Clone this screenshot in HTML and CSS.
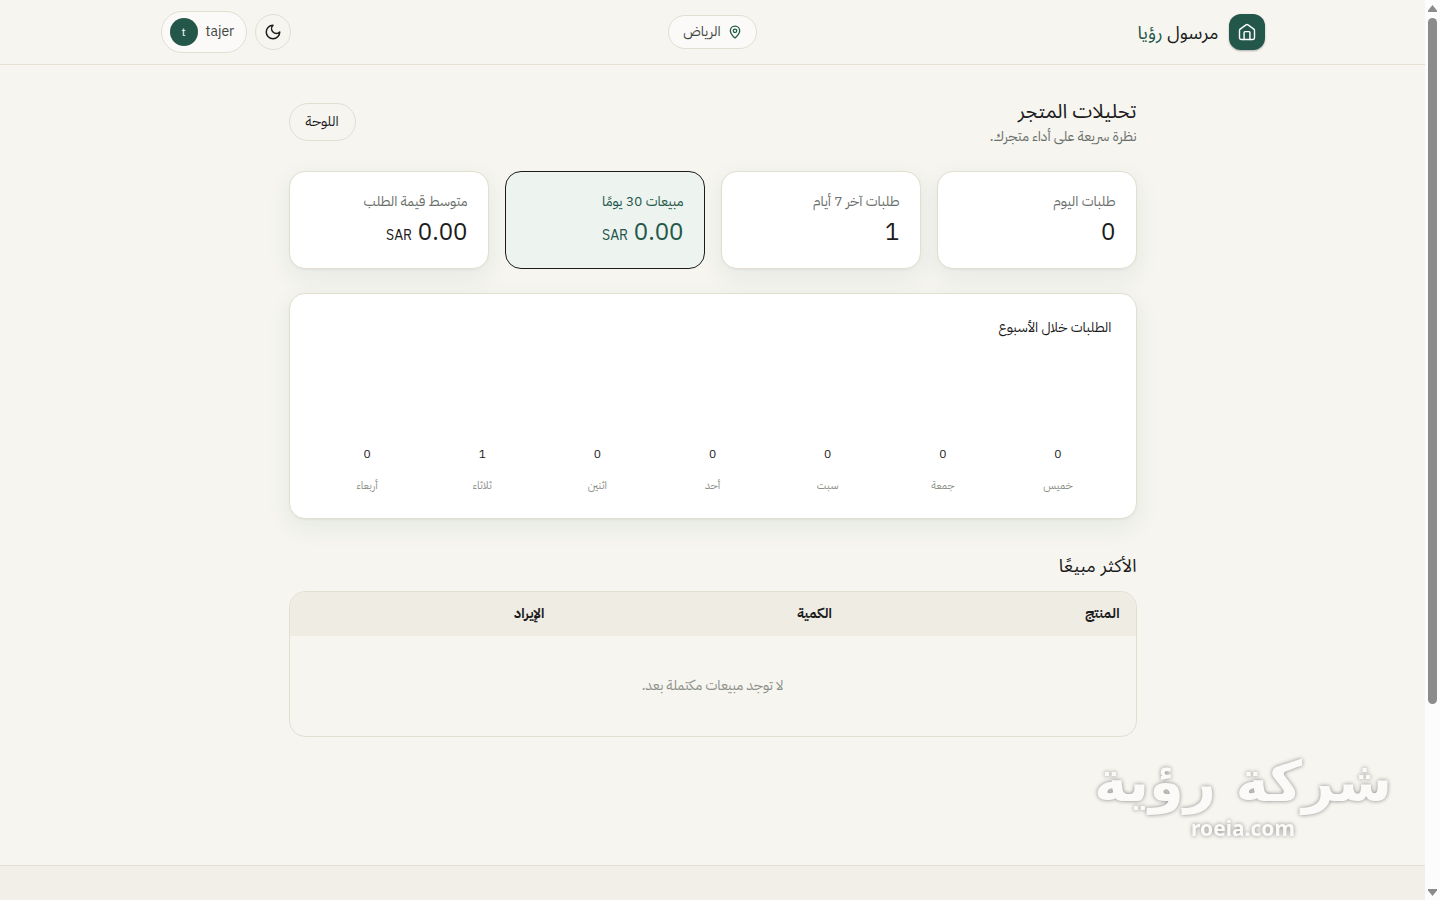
FILE: index.html
```html
<!DOCTYPE html>
<html lang="ar" dir="rtl">
<head>
  <meta charset="UTF-8">
  <meta name="viewport" content="width=device-width, initial-scale=1.0">
  <title>تحليلات المتجر</title>
  <link rel="stylesheet" href="styles.css">
</head>
<body>
  <div class="page">
    <header class="header">
      <div class="header_inner">
        <a href="#" class="brand">
          <span class="brand_logo">
            <svg width="20" height="20" viewBox="0 0 24 24" fill="none" stroke="currentColor" stroke-width="1.7" stroke-linecap="round" stroke-linejoin="round">
              <path d="M3 10.2a2 2 0 0 1 .8-1.6l7-5.2a2 2 0 0 1 2.4 0l7 5.2a2 2 0 0 1 .8 1.6V19a2 2 0 0 1-2 2H5a2 2 0 0 1-2-2z"/>
              <path d="M8.5 21v-8.500a1 1 0 0 1 1-1h5a1 1 0 0 1 1 1V21"/>
            </svg>
          </span>
          <span class="brand_name">مرسول <span class="accent">رؤيا</span></span>
        </a>
        <button type="button" class="city">
          <svg width="14" height="14" viewBox="0 0 24 24" fill="none" stroke="currentColor" stroke-width="2.2" stroke-linecap="round" stroke-linejoin="round">
            <path d="M20 10c0 5-5.500 10.200-7.400 11.800a1 1 0 0 1-1.200 0C9.500 20.200 4 15 4 10a8 8 0 0 1 16 0z"/>
            <circle cx="12" cy="10" r="3"/>
          </svg>
          <span>الرياض</span>
        </button>
        <div class="actions">
          <button type="button" class="theme" aria-label="الوضع الليلي">
            <svg width="18" height="18" viewBox="0 0 24 24" fill="none" stroke="currentColor" stroke-width="2" stroke-linecap="round" stroke-linejoin="round">
              <path d="M12 3a6 6 0 0 0 9 9 9 9 0 1 1-9-9z"/>
            </svg>
          </button>
          <button type="button" class="user">
            <span>tajer</span>
            <span class="avatar">t</span>
          </button>
        </div>
      </div>
    </header>

    <main class="main">
      <div class="title_row">
        <div>
          <h1>تحليلات المتجر</h1>
          <p>نظرة سريعة على أداء متجرك.</p>
        </div>
        <a href="#" class="board_link">اللوحة</a>
      </div>

      <section class="stats">
        <div class="card stat">
          <p class="stat_label">طلبات اليوم</p>
          <p class="stat_value">0</p>
        </div>
        <div class="card stat">
          <p class="stat_label">طلبات آخر 7 أيام</p>
          <p class="stat_value">1</p>
        </div>
        <div class="card stat active">
          <p class="stat_label">مبيعات 30 يومًا</p>
          <p class="stat_value">0.00 <small>SAR</small></p>
        </div>
        <div class="card stat">
          <p class="stat_label">متوسط قيمة الطلب</p>
          <p class="stat_value">0.00 <small>SAR</small></p>
        </div>
      </section>

      <section class="card chart">
        <h2>الطلبات خلال الأسبوع</h2>
        <ul class="days">
          <li><span>0</span><span class="day">خميس</span></li>
          <li><span>0</span><span class="day">جمعة</span></li>
          <li><span>0</span><span class="day">سبت</span></li>
          <li><span>0</span><span class="day">أحد</span></li>
          <li><span>0</span><span class="day">اثنين</span></li>
          <li><span>1</span><span class="day">ثلاثاء</span></li>
          <li><span>0</span><span class="day">أربعاء</span></li>
        </ul>
      </section>

      <section class="top">
        <h2>الأكثر مبيعًا</h2>
        <div class="table_wrap">
          <table>
            <thead>
              <tr><th>المنتج</th><th>الكمية</th><th>الإيراد</th></tr>
            </thead>
            <tbody>
              <tr><td colspan="3">لا توجد مبيعات مكتملة بعد.</td></tr>
            </tbody>
          </table>
        </div>
      </section>
    </main>

    <footer class="footer"></footer>
  </div>

  <div class="scrollbar">
    <svg width="9" height="7" viewBox="0 0 9 7"><path d="M4.500 0 9 5.500V7H0V5.500z" fill="#8b8b8b"/></svg>
    <div class="thumb"></div>
    <svg class="down" width="9" height="7" viewBox="0 0 9 7"><path d="M4.500 7 9 1.500V0H0V1.500z" fill="#8b8b8b"/></svg>
  </div>

  <div class="watermark">
    <div class="watermark_name">شركة رؤية</div>
    <div class="watermark_site">roeia.com</div>
  </div>
</body>
</html>
```
FILE: styles.css
```css
*{
  margin: 0;
  padding: 0;
  box-sizing: border-box;
}
body{
  display: flex;
  flex-direction: row-reverse;
  height: 100vh;
  overflow: hidden;
  background-color: #f6f5f0;
  color: #1c1c1c;
  font-family: "IBM Plex Sans Arabic", Inter, "Noto Sans Arabic", "DejaVu Sans Condensed", "DejaVu Sans", sans-serif;
  font-size: 14px;
  line-height: 20px;
}
button{
  font: inherit;
  color: inherit;
  cursor: pointer;
}
a{
  color: inherit;
  text-decoration: none;
}
h1, h2{
  font-weight: 400;
}
.page{
  flex: 1;
  min-width: 0;
  display: flex;
  flex-direction: column;
}

/* header */
.header{
  border-bottom: 1px solid #e6e1d3;
}
.header_inner{
  max-width: 1152px;
  height: 64px;
  margin: 0 auto;
  padding: 0 24px;
  display: grid;
  grid-template-columns: 1fr auto 1fr;
  align-items: center;
}
.brand{
  display: flex;
  align-items: center;
  gap: 10px;
}
.brand_logo{
  width: 36px;
  height: 36px;
  display: flex;
  align-items: center;
  justify-content: center;
  border-radius: 12px;
  background-color: #23574a;
  color: #fff;
  box-shadow: 0 1px 2px rgba(0, 0, 0, 0.3);
}
.brand_name, .title_row h1, .top h2{
  font-family: "Noto Sans", "Noto Sans Arabic", sans-serif;
  font-size: 18px;
  line-height: 28px;
}
.accent{
  color: #23574a;
}
.city{
  height: 34px;
  padding: 0 14px;
  display: flex;
  align-items: center;
  gap: 7px;
  border: 1px solid #e3dfd0;
  border-radius: 17px;
  background-color: #fbfaf8;
  color: #404642;
}
.city svg{
  color: #23574a;
}
.actions{
  display: flex;
  align-items: center;
  justify-content: flex-end;
  gap: 8px;
}
.theme{
  width: 36px;
  height: 36px;
  display: flex;
  align-items: center;
  justify-content: center;
  border: 1px solid #e3dfd0;
  border-radius: 50%;
  background-color: transparent;
}
.user{
  height: 42px;
  padding: 0 12px 0 8px;
  display: flex;
  align-items: center;
  gap: 8px;
  border: 1px solid #e3dfd0;
  border-radius: 21px;
  background-color: #fbfaf8;
  color: #404642;
}
.avatar{
  width: 28px;
  height: 28px;
  border-radius: 50%;
  background-color: #23574a;
  color: #fff;
  font-size: 12px;
  line-height: 28px;
  text-align: center;
}

/* content */
.main{
  width: 100%;
  max-width: 896px;
  margin: 0 auto;
  padding: 32px 24px 128px;
}
.title_row{
  display: flex;
  align-items: center;
  justify-content: space-between;
  margin-bottom: 24px;
}
.title_row h1{
  font-size: 20px;
}
.title_row p{
  margin-top: 2px;
  color: #6a6f6b;
}
.board_link{
  padding: 8px 16px;
  border: 1px solid #e3dfd0;
  border-radius: 19px;
}
.card{
  border: 1px solid #e3dfd0;
  border-radius: 16px;
  background-color: #fff;
  box-shadow: 0 1px 2px rgba(35, 87, 74, 0.05), 0 8px 24px rgba(35, 87, 74, 0.08);
}
.stats{
  display: grid;
  grid-template-columns: repeat(4, 1fr);
  gap: 16px;
}
.stat{
  padding: 20px;
}
.stat_label{
  color: #6a6f6b;
}
.stat_value{
  margin-top: 4px;
  font-size: 24px;
  line-height: 32px;
}
.stat_value small{
  font-size: 14px;
  line-height: 20px;
}
.stat.active{
  border-color: #1c1c1c;
  background-color: #edf3ef;
  box-shadow: none;
}
.active .stat_label, .active .stat_value{
  color: #23574a;
}
.chart{
  margin-top: 24px;
  padding: 24px;
}
.chart h2{
  font-size: 14px;
}
.days{
  height: 156px;
  display: flex;
  align-items: flex-end;
  gap: 8px;
  list-style-type: none;
}
.days li{
  flex: 1;
  display: flex;
  flex-direction: column;
  align-items: center;
  gap: 16px;
  font-size: 12px;
  line-height: 16px;
}
.day{
  font-size: 11px;
  color: #8b8f87;
}
.top{
  margin-top: 32px;
}
.table_wrap{
  margin-top: 12px;
  border: 1px solid #e3dfd0;
  border-radius: 16px;
  overflow: hidden;
}
table{
  width: 100%;
  border-collapse: collapse;
}
th{
  width: 32%;
  padding: 12px 16px;
  background-color: #efece4;
  text-align: start;
}
th:first-child, th:nth-child(2){
  width: 34%;
}
td{
  padding: 40px 16px;
  text-align: center;
  color: #8b8f87;
}
.footer{
  flex: 1;
  border-top: 1px solid #e3dfd0;
  background-color: #f2efe8;
}

/* scrollbar */
.scrollbar{
  width: 15px;
  padding: 5px 0 4px;
  display: flex;
  flex-direction: column;
  align-items: center;
  gap: 6px;
  background-color: #fcfcfc;
}
.thumb{
  width: 9px;
  height: 77%;
  border-radius: 5px;
  background-color: #8b8b8b;
}
.down{
  margin-top: auto;
}

/* watermark */
.watermark{
  position: fixed;
  right: 48px;
  bottom: 58px;
  color: #fbfaf8;
  font-family: "DejaVu Sans", sans-serif;
  font-weight: 700;
  text-align: center;
  text-shadow: 0 0 4px rgba(0, 0, 0, 0.45);
}
.watermark_name{
  font-size: 56px;
  line-height: 64px;
}
.watermark_site{
  font-family: "Noto Sans", sans-serif;
  font-size: 21px;
  line-height: 28px;
}
```
